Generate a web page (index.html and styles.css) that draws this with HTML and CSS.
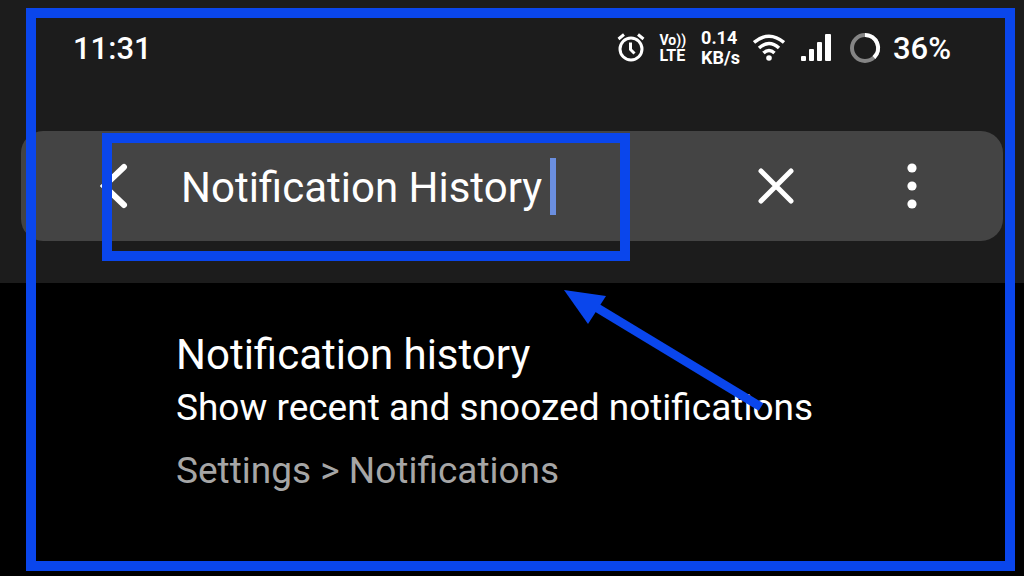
FILE: index.html
```html
<!DOCTYPE html>
<html lang="en">
<head>
    <meta charset="UTF-8">
    <meta name="viewport" content="width=device-width, initial-scale=1.0">
    <title>Notification History</title>
    <link rel="stylesheet" href="styles.css">
</head>
<body>

    <div class="screen">
        <header class="header">
            <div class="status-bar">
                <div class="time">11:31</div>
                <div class="status-icons">
                    <!-- Alarm -->
                    <svg class="alarm" width="28" height="30" viewBox="0 0 28 30" fill="none" stroke="#fff">
                        <circle cx="14" cy="16" r="11" stroke-width="3"/>
                        <path d="M13.500 9.500V16.500L17.500 20.500" stroke-width="3"/>
                        <path d="M1.500 6L7 1.500M21 1.500L26.500 6" stroke-width="3"/>
                    </svg>
                    <div class="stack volte"><span class="vo">Vo))</span><span>LTE</span></div>
                    <div class="stack speed"><span>0.14</span><span>KB/s</span></div>
                    <!-- Wi-Fi -->
                    <svg class="wifi" width="32" height="28" viewBox="0 0 32 28" fill="none" stroke="#fff" stroke-width="3.500">
                        <path d="M1 8.500Q16 -4 31 8.500"/>
                        <path d="M6 14Q16 5 26 14"/>
                        <path d="M10.500 19Q16 14 21.500 19"/>
                        <circle cx="16" cy="24" r="2.800" fill="#fff" stroke="none"/>
                    </svg>
                    <!-- Signal -->
                    <svg class="signal" width="32" height="30" viewBox="0 0 32 30" fill="#fff">
                        <rect x="1" y="23" width="5" height="5" rx="1"/>
                        <rect x="9" y="16" width="5" height="12" rx="1"/>
                        <rect x="17" y="9" width="5" height="19" rx="1"/>
                        <rect x="25" y="1" width="6" height="27" rx="1"/>
                    </svg>
                    <!-- Battery ring -->
                    <svg class="battery" width="32" height="32" viewBox="0 0 32 32" fill="none" stroke-width="4">
                        <circle cx="16" cy="16" r="13" stroke="#858585"/>
                        <path d="M16 3A13 13 0 0 1 25 25.500" stroke="#fff"/>
                    </svg>
                    <span class="percent">36%</span>
                </div>
            </div>

            <form class="search" role="search">
                <button class="icon-button back" type="button" aria-label="Back">
                    <svg width="28" height="48" viewBox="0 0 28 48" fill="none" stroke="#fff" stroke-width="6" stroke-linecap="round">
                        <path d="M24 5L4 24L24 43"/>
                    </svg>
                </button>
                <div class="field">
                    <input class="query" type="text" value="Notification History" aria-label="Search settings">
                    <span class="caret"></span>
                </div>
                <button class="icon-button clear" type="button" aria-label="Clear">
                    <svg width="38" height="38" viewBox="0 0 38 38" stroke="#fff" stroke-width="5" stroke-linecap="round">
                        <path d="M4 4L34 34M34 4L4 34"/>
                    </svg>
                </button>
                <button class="icon-button more" type="button" aria-label="More options">
                    <svg width="10" height="48" viewBox="0 0 10 48" fill="#fff">
                        <circle cx="5" cy="6" r="4.600"/>
                        <circle cx="5" cy="24" r="4.600"/>
                        <circle cx="5" cy="42" r="4.600"/>
                    </svg>
                </button>
                <div class="highlight"></div>
            </form>
        </header>

        <main class="result">
            <h1 class="result-title">Notification history</h1>
            <p class="result-text">Show recent and snoozed notifications</p>
            <p class="result-path">Settings &gt; Notifications</p>
        </main>

        <!-- Arrow pointing at the search text -->
        <svg class="arrow" width="204" height="124" viewBox="0 0 204 124">
            <path d="M30 16L197 117" stroke="#0a46ec" stroke-width="9"/>
            <path d="M0 0L42 6L24 34Z" fill="#0a46ec"/>
        </svg>
        <div class="frame"></div>
    </div>

</body>
</html>
```
FILE: styles.css
```css
body {
    margin: 0;
    background-color: #000;
    color: #fff;
    font-family: Roboto, "Liberation Sans", sans-serif;
}
.screen {
    position: relative;
    min-height: 100vh;
    overflow: hidden;
}
.header {
    background-color: #1c1c1c;
    padding: 24px 21px 42px;
}

/* Status bar */
.status-bar {
    display: flex;
    justify-content: space-between;
    align-items: center;
    height: 48px;
    margin-bottom: 59px;
    padding: 0 52px;
    font-size: 31px;
    font-weight: 500;
}
.status-icons {
    display: flex;
    align-items: center;
}
.stack {
    display: flex;
    flex-direction: column;
    font-size: 18px;
    line-height: 20px;
    font-weight: 700;
}
.volte {
    font-size: 16px;
    line-height: 15px;
    margin-left: 14px;
}
.vo {
    font-size: 14px;
}
.speed {
    margin-left: 15px;
}
.wifi {
    margin-left: 13px;
}
.signal {
    margin-left: 15px;
}
.battery {
    margin-left: 17px;
}
.percent {
    margin-left: 12px;
}

/* Search bar */
.search {
    position: relative;
    display: flex;
    align-items: center;
    height: 110px;
    padding: 0 86px 0 79px;
    border-radius: 22px;
    background-color: #444;
}
.icon-button {
    display: flex;
    padding: 0;
    border: none;
    background: none;
    cursor: pointer;
}
.field {
    display: flex;
    flex: 1;
    align-items: center;
    margin-left: 53px;
}
.query {
    field-sizing: content;
    padding: 3px 0 0;
    border: none;
    outline: none;
    background: none;
    color: #fff;
    font-family: inherit;
    font-size: 42px;
}
.caret {
    width: 6px;
    height: 57px;
    margin-left: 8px;
    background-color: #6b8fe0;
}
.more {
    margin-left: 112px;
}

/* Result */
.result {
    padding: 48px 48px 48px 176px;
}
.result-title {
    margin: 0;
    font-size: 42px;
    line-height: 48px;
    font-weight: 400;
}
.result-text {
    margin: 8px 0 0;
    font-size: 37px;
    line-height: 42px;
}
.result-path {
    margin: 21px 0 0;
    font-size: 37px;
    line-height: 42px;
    color: #a6a6a6;
}

/* Blue marks over the screen */
.highlight {
    position: absolute;
    top: 2px;
    left: 81px;
    box-sizing: border-box;
    width: 528px;
    height: 128px;
    border: 10px solid #0a46ec;
    pointer-events: none;
}
.arrow {
    position: absolute;
    top: 290px;
    left: 564px;
    pointer-events: none;
}
.frame {
    position: absolute;
    top: 8px;
    right: 9px;
    bottom: 5px;
    left: 26px;
    border: 10px solid #0a46ec;
    pointer-events: none;
}
```
